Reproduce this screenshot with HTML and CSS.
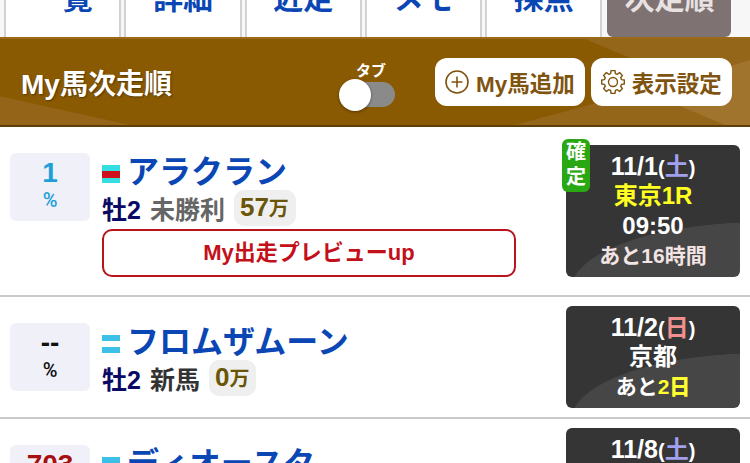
FILE: index.html
```html
<!DOCTYPE html>
<html lang="ja">
<head>
  <meta charset="UTF-8">
  <title>My馬次走順</title>
  <link rel="stylesheet" href="styles.css">
</head>
<body>
  <div class="app-container">
    <!-- Tabs -->
    <nav class="tabs">
      <a class="tab">一覧</a>
      <a class="tab">詳細</a>
      <a class="tab">近走</a>
      <a class="tab">メモ</a>
      <a class="tab">採点</a>
      <a class="tab tab-active">次走順</a>
    </nav>

    <!-- Header -->
    <header class="list-header">
      <svg class="header-bg" viewBox="0 0 750 90" preserveAspectRatio="none" aria-hidden="true">
        <polygon points="0,60 0,90 130,90" fill="#946518"/>
        <polygon points="585,0 750,0 750,90 515,90 600,66 635,22" fill="#93661a"/>
        <polygon points="750,22 725,30 680,70 725,90 750,90" fill="#a0742c"/>
      </svg>
      <h1 class="header-title">My馬次走順</h1>
      <div class="tab-toggle">
        <span class="toggle-label">タブ</span>
        <span class="toggle-track"><span class="toggle-knob"></span></span>
      </div>
      <div class="header-buttons">
        <button class="header-button">
          <svg width="24" height="24" viewBox="0 0 24 24" fill="none" stroke="#7f5410" stroke-width="1.6">
            <circle cx="12" cy="12" r="11"/>
            <path d="M12 6.500v11M6.500 12h11"/>
          </svg>
          My馬追加
        </button>
        <button class="header-button">
          <svg width="24" height="24" viewBox="0 0 24 24" fill="none" stroke="#7f5410" stroke-width="1.4" stroke-linejoin="round">
            <path d="M10 .67L14 .67 14.430 3.540 16.270 4.300 18.600 2.580 21.420 5.400 19.700 7.730 20.460 9.570 23.330 10 23.330 14 20.460 14.430 19.700 16.270 21.420 18.600 18.600 21.420 16.270 19.700 14.430 20.460 14 23.330 10 23.330 9.570 20.460 7.730 19.700 5.400 21.420 2.580 18.600 4.300 16.270 3.540 14.430 .67 14 .67 10 3.540 9.570 4.300 7.730 2.580 5.400 5.400 2.580 7.730 4.300 9.570 3.540Z"/>
            <circle cx="12" cy="12" r="4.500"/>
          </svg>
          表示設定
        </button>
      </div>
    </header>

    <!-- Horse list -->
    <main class="horse-list">
      <section class="horse-row horse-row-first">
        <div class="rate-box rate-blue">
          <span class="rate-num">1</span>
          <span class="rate-unit">%</span>
        </div>
        <div class="horse-info">
          <div class="horse-name"><span class="waku waku-red"></span>アラクラン</div>
          <div class="horse-meta">
            <span class="horse-sex">牡2</span>
            <span class="horse-class horse-class-grey">未勝利</span>
            <span class="prize">57<small>万</small></span>
          </div>
          <a class="preview-button">My出走プレビューup</a>
        </div>
        <div class="race-box">
          <span class="badge-fixed">確定</span>
          <span class="race-date">11/1<small>(<em class="sat">土</em>)</small></span>
          <span class="race-line race-yellow">東京1R</span>
          <span class="race-line">09:50</span>
          <span class="race-left race-pink">あと16時間</span>
        </div>
      </section>

      <section class="horse-row">
        <div class="rate-box">
          <span class="rate-num">--</span>
          <span class="rate-unit">%</span>
        </div>
        <div class="horse-info">
          <div class="horse-name"><span class="waku waku-white"></span>フロムザムーン</div>
          <div class="horse-meta">
            <span class="horse-sex">牡2</span>
            <span class="horse-class">新馬</span>
            <span class="prize">0<small>万</small></span>
          </div>
        </div>
        <div class="race-box">
          <span class="race-date">11/2<small>(<em class="sun">日</em>)</small></span>
          <span class="race-line">京都</span>
          <span class="race-left">あと<b>2日</b></span>
        </div>
      </section>

      <section class="horse-row">
        <div class="rate-box rate-red">
          <span class="rate-num">703</span>
          <span class="rate-unit">%</span>
        </div>
        <div class="horse-info">
          <div class="horse-name"><span class="waku waku-white"></span>ディオースタ</div>
        </div>
        <div class="race-box">
          <span class="race-date">11/8<small>(<em class="sat">土</em>)</small></span>
          <span class="race-line">東京</span>
          <span class="race-left">あと8日</span>
        </div>
      </section>
    </main>
  </div>
</body>
</html>
```
FILE: styles.css
```css
body {
  margin: 0;
  font-family: "Liberation Sans", "Noto Sans CJK JP", sans-serif;
  font-weight: 700;
  background: #fff;
}

.app-container {
  width: 750px;
  height: 463px;
  overflow: hidden;
}

/* Tabs */
.tabs {
  display: flex;
  align-items: flex-end;
  gap: 7px;
  height: 37px;
  padding-left: 6px;
  overflow: hidden;
  background: #f7f7f7;
}

.tab {
  flex: 0 0 113.300px;
  height: 62px;
  line-height: 48px;
  text-align: center;
  font-size: 30px;
  color: #0a46b4;
  background: #fff;
  box-shadow: 0 0 0 2px #d2d2d2;
}

.tab-active {
  flex-basis: 124px;
  color: #e8e2e2;
  background: #7f7272;
  border-radius: 0 0 6px 6px;
  box-shadow: none;
}

/* Header */
.list-header {
  position: relative;
  display: flex;
  align-items: center;
  height: 90px;
  padding-left: 21px;
  box-sizing: border-box;
  background: #8a5a02;
  border-top: 2px solid #9a6a18;
  border-bottom: 2px solid #5f3e08;
}

.header-bg {
  position: absolute;
  left: 0;
  top: 0;
  width: 100%;
  height: 100%;
}

.header-title {
  position: relative;
  flex: 0 0 318px;
  margin: 0;
  font-size: 28px;
  color: #fff;
  text-shadow: 1px 1px 2px rgba(0,0,0,0.4);
}

.tab-toggle {
  position: relative;
  flex: 0 0 56px;
  display: flex;
  flex-direction: column;
  align-items: center;
  gap: 2px;
  margin-top: 2px;
}

.toggle-label {
  margin-left: 8px;
  font-size: 15px;
  color: #fff;
}

.toggle-track {
  position: relative;
  display: block;
  width: 55px;
  height: 25px;
  border-radius: 13px;
  background: #8a8a8a;
}

.toggle-knob {
  position: absolute;
  left: -1px;
  top: -3px;
  width: 32px;
  height: 32px;
  border-radius: 50%;
  background: #fff;
  box-shadow: 0 1px 3px rgba(0,0,0,0.4);
}

.header-buttons {
  position: relative;
  display: flex;
  gap: 6px;
  margin-left: 40px;
}

.header-button {
  display: flex;
  align-items: center;
  gap: 7px;
  height: 48px;
  padding: 0 10px;
  border: none;
  border-radius: 12px;
  background: #fff;
  color: #7f5410;
  font: inherit;
  font-size: 22.500px;
  white-space: nowrap;
}

/* Horse rows */
.horse-row {
  display: flex;
  align-items: center;
  padding: 9px 10px;
  border-bottom: 2px solid #c9c9c9;
}

.horse-row-first {
  padding-top: 18px;
  padding-bottom: 18px;
}

.rate-box {
  flex: 0 0 80px;
  display: flex;
  flex-direction: column;
  align-items: center;
  height: 68px;
  align-self: flex-start;
  margin-top: 17px;
  border-radius: 6px;
  background: #f0f0f8;
  color: #111;
}

.horse-row-first .rate-box {
  margin-top: 8px;
}

.rate-blue { color: #1e9fd8; }
.rate-red { color: #a80f0f; }

.rate-num {
  font-size: 28px;
  line-height: 40px;
}

.rate-unit {
  font-family: Roboto, sans-serif;
  font-size: 20px;
  font-weight: 500;
  line-height: 14px;
}

.horse-info {
  flex: 1;
  align-self: flex-start;
  margin: 12px 50px 0 12px;
}

.horse-row-first .horse-info {
  margin-top: 3px;
}

.horse-name {
  display: flex;
  align-items: center;
  gap: 7px;
  height: 42px;
  font-size: 32px;
  color: #0a46b4;
  white-space: nowrap;
}

.waku {
  flex: 0 0 18px;
  height: 18px;
  margin-top: 10px;
}

.waku-red { background: linear-gradient(#35dde0 6px, #d0101c 6px, #d0101c 13px, #35dde0 13px); }
.waku-white { background: linear-gradient(#3cc0e8 6px, #fff 6px, #fff 12px, #3cc0e8 12px); }

.horse-meta {
  display: flex;
  align-items: center;
  gap: 9px;
  height: 36px;
  font-size: 25px;
  color: #333;
}

.horse-sex { color: #0a0a66; }
.horse-class-grey { color: #666; }

.prize {
  padding: 0 7px 0 6px;
  line-height: 34px;
  border-radius: 10px;
  background: #efefef;
  color: #6a5608;
  font-size: 26px;
}

.prize small { font-size: 20px; }

.preview-button {
  display: block;
  height: 48px;
  margin-top: 3px;
  line-height: 44px;
  box-sizing: border-box;
  border: 2px solid #b8141c;
  border-radius: 10px;
  text-align: center;
  font-size: 22px;
  color: #c4101a;
}

.race-box {
  position: relative;
  flex: 0 0 174px;
  display: flex;
  flex-direction: column;
  align-items: center;
  padding: 6px 0;
  border-radius: 6px;
  color: #fff;
  background: radial-gradient(ellipse 190px 68px at calc(100% + 20px) calc(100% + 13px), #464646 99%, #353535 100%);
}

.race-date {
  height: 30px;
  font-size: 25px;
  line-height: 30px;
}

.race-date small { font-size: 20px; }
.race-date em { font-style: normal; font-size: 24px; }
.sat { color: #a0a0ee; }
.sun { color: #f09090; }

.race-line {
  height: 30px;
  font-size: 24px;
  line-height: 30px;
}

.race-left {
  height: 30px;
  font-size: 21px;
  line-height: 30px;
}

.race-left b { color: #ffff30; }
.race-yellow { color: #ffff20; }
.race-pink { color: #f4e4e4; }

.badge-fixed {
  position: absolute;
  left: -4px;
  top: -6px;
  width: 28px;
  padding: 1px 0 2px;
  text-align: center;
  font-size: 20px;
  line-height: 25px;
  border-radius: 6px;
  background: #2aa814;
  color: #fff;
}
```
